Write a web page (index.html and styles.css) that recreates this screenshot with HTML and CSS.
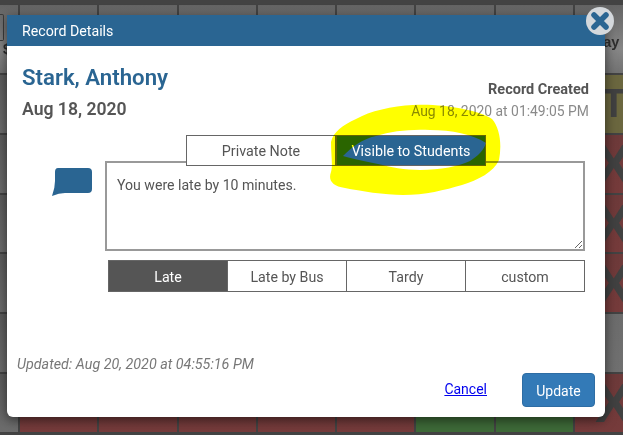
FILE: index.html
```html
<!DOCTYPE html>
<html lang="en">
<head>
<meta charset="utf-8">
<title>Record Details</title>
<link rel="stylesheet" href="styles.css">
</head>
<body>
<div class="sheet">
  <div class="grid">
    <div class="cell head first"><span class="stub"></span><span class="blob">$</span></div>
    <div class="cell head"></div><div class="cell head"></div><div class="cell head"></div><div class="cell head"></div><div class="cell head"></div><div class="cell head"></div><div class="cell head"></div>
    <div class="cell head day"><span>Friday</span></div>

    <div class="cell side"></div>
    <div class="cell olive"></div><div class="cell olive"></div><div class="cell olive"></div><div class="cell olive"></div><div class="cell olive"></div><div class="cell olive"></div><div class="cell olive"></div>
    <div class="cell olive mark-t">T</div>

    <div class="cell side"></div>
    <div class="cell red"></div><div class="cell red"></div><div class="cell red"></div><div class="cell red"></div><div class="cell red"></div><div class="cell red"></div><div class="cell red"></div>
    <div class="cell red mark-x">X</div>

    <div class="cell side"></div>
    <div class="cell red"></div><div class="cell red"></div><div class="cell red"></div><div class="cell red"></div><div class="cell red"></div><div class="cell red"></div><div class="cell red"></div>
    <div class="cell red mark-x">X</div>

    <div class="cell side"></div>
    <div class="cell red"></div><div class="cell red"></div><div class="cell red"></div><div class="cell red"></div><div class="cell red"></div><div class="cell red"></div><div class="cell red"></div>
    <div class="cell red mark-x">X</div>

    <div class="cell side"></div>
    <div class="cell grey"></div><div class="cell grey"></div><div class="cell grey"></div><div class="cell grey"></div><div class="cell grey"></div><div class="cell grey"></div><div class="cell grey"></div>
    <div class="cell grey"></div>

    <div class="cell side"></div>
    <div class="cell red"></div><div class="cell red"></div><div class="cell red"></div><div class="cell red"></div><div class="cell red"></div>
    <div class="cell green"></div><div class="cell green"></div>
    <div class="cell red mark-x">X</div>
  </div>

  <section class="modal">
    <header class="modal-head">Record Details</header>
    <div class="modal-body">
      <div class="summary">
        <div class="who">
          <h1 class="name">Stark, Anthony</h1>
          <p class="date">Aug 18, 2020</p>
        </div>
        <div class="created">
          <p class="created-label">Record Created</p>
          <p class="created-time">Aug 18, 2020 at 01:49:05 PM</p>
        </div>
      </div>

      <div class="note-row">
        <svg class="bubble" viewBox="0 0 40 28" width="40" height="28" aria-hidden="true">
          <path d="M6 0H36Q40 0 40 4V21Q40 25 36 25H13Q7 25 0 28Q3 20 3 13V4Q3 0 6 0Z"/>
        </svg>
        <div class="note-main">
          <div class="tabs">
            <button class="tab">Private Note</button>
            <button class="tab active">Visible to Students</button>
          </div>
          <textarea class="note" spellcheck="false">You were late by 10 minutes.</textarea>
          <div class="choices">
            <button class="choice on">Late</button>
            <button class="choice">Late by Bus</button>
            <button class="choice">Tardy</button>
            <button class="choice">custom</button>
          </div>
        </div>
      </div>

      <p class="updated">Updated: Aug 20, 2020 at 04:55:16 PM</p>

      <div class="actions">
        <a class="cancel" href="#">Cancel</a>
        <button class="update">Update</button>
      </div>
    </div>
  </section>

  <svg class="close" viewBox="0 0 28 28" width="28" height="28" aria-hidden="true">
    <circle cx="14" cy="14" r="14"/>
    <path d="M8 8L20 20M20 8L8 20"/>
  </svg>

  <svg class="scribble" viewBox="0 0 623 435" width="623" height="435" aria-hidden="true">
    <path fill-rule="evenodd" d="M413 105C392 106 370 111 356 119C343 125 333 132 331 142C331 155 333 165 331 172C328 180 332 186 345 188C360 191 385 195 403 195C425 195 445 190 462 185C478 180 494 172 499 160C502 145 500 128 492 119C480 110 440 103 413 105ZM343 156C352 147 362 139 376 136C392 131 410 129 430 130C452 130 472 134 486 143C484 150 478 156 470 161C460 166 440 170 420 170C405 170 390 167 378 164C365 161 352 159 343 156Z"/>
  </svg>
</div>
</body>
</html>
```
FILE: styles.css
```css
* { box-sizing: border-box; }
html, body { margin: 0; padding: 0; }
body { font-family: Roboto, "Liberation Sans", sans-serif; background: #3f3f3f; }

.sheet {
  position: relative;
  width: 623px;
  height: 435px;
  overflow: hidden;
  background: #434343;
}

/* dimmed table behind the dialog */
.grid {
  display: grid;
  grid-template-columns: 18px repeat(8, 77.3px);
  grid-template-rows: 68px repeat(6, 57.8px);
  gap: 2px;
  padding-top: 5px;
  width: 700px;
}
.cell {
  display: flex;
  align-items: center;
  justify-content: center;
  overflow: hidden;
  color: #414141;
  font-family: "Liberation Sans", sans-serif;
}
.head { background: linear-gradient(#646464, #868686 65%, #727272); }
.first { flex-direction: column; align-items: flex-start; justify-content: flex-start; padding-top: 9px; }
.stub { display: block; width: 4px; height: 27px; border: 1px solid #3d3d3d; border-left: 0; border-radius: 0 2px 2px 0; }
.blob { margin-left: 3px; font-size: 14px; font-weight: 700; line-height: 16px; color: #2a2a2a; }
.day { justify-content: flex-end; align-items: flex-start; padding: 29px 33px 0 0; font-size: 14.5px; font-weight: 700; color: #2e2e2e; }
.day span { white-space: nowrap; }
.side { background: linear-gradient(#5c5c5c, #6d6d6d); }
.olive { background: #6b673f; }
.red { background: linear-gradient(#6d3a3a, #763b3b); }
.grey { background: linear-gradient(#6c6c6c, #707070); }
.green { background: #3e6a38; }
.mark-t { font-size: 40px; line-height: 57px; font-weight: 700; }
.mark-x { font-size: 56px; line-height: 57px; font-weight: 700; }

/* dialog */
.modal {
  position: absolute;
  z-index: 0;
  left: 7px;
  top: 15px;
  width: 598px;
  height: 402px;
  display: flex;
  flex-direction: column;
  background: #fff;
  border-radius: 0 0 6px 6px;
  box-shadow: 0 3px 12px rgba(0, 0, 0, 0.55);
}
.modal-head {
  height: 31px;
  flex: none;
  padding: 0 15px;
  background: #2a6592;
  color: #fff;
  font-size: 14.2px;
  line-height: 32px;
}
.modal-body {
  flex: 1;
  display: flex;
  flex-direction: column;
  padding: 0 10px 10px 10px;
}
.summary {
  display: flex;
  justify-content: space-between;
  padding: 0 6px 0 5px;
}
.name {
  margin: 19px 0 0;
  color: #2a6592;
  font-size: 22.2px;
  line-height: 24px;
  font-weight: 600;
}
.date {
  margin: 9px 0 0;
  color: #555;
  font-size: 17.6px;
  line-height: 22px;
  font-weight: 600;
}
.created { text-align: right; padding-top: 36px; }
.created-label {
  margin: 0;
  color: #555;
  font-size: 14.5px;
  line-height: 16px;
  font-weight: 700;
}
.created-time {
  margin: 5px 0 0;
  color: #8a8a8a;
  font-size: 13.9px;
  line-height: 16px;
}

.note-row {
  display: flex;
  margin-top: 15px;
  padding-left: 35px;
}
.bubble { flex: none; margin-top: 33px; fill: #2a6592; }
.note-main {
  width: 480px;
  margin-left: 13px;
  display: flex;
  flex-direction: column;
}
.tabs {
  position: relative;
  z-index: 1;
  display: flex;
  height: 31px;
  margin: 0 0 -5px 81px;
}
.tab {
  width: 150px;
  height: 31px;
  margin: 0;
  padding: 1px 0 0;
  border: 1px solid #666;
  background: #fff;
  color: #555;
  font: inherit;
  font-size: 14.3px;
}
.tab.active { background: #2a6592; color: #fff; }
.note {
  display: block;
  width: 480px;
  height: 90px;
  padding: 13px 10px;
  border: 2px solid #999;
  border-radius: 0;
  outline: 0;
  color: #555;
  font: inherit;
  font-size: 14.1px;
  line-height: 18px;
  resize: both;
}
.choices {
  display: flex;
  margin: 9px 0 0 3px;
  height: 32px;
}
.choice {
  flex: 1;
  margin: 0 0 0 -1px;
  padding: 1px 0 0;
  border: 1px solid #666;
  background: #fff;
  color: #555;
  font: inherit;
  font-size: 14.2px;
}
.choice:first-child { margin-left: 0; }
.choice.on { background: #555; color: #fff; border-color: #666; }

.updated {
  margin: 63px 0 0;
  color: #777;
  font-size: 14.3px;
  line-height: 18px;
  font-style: italic;
}
.actions {
  display: flex;
  justify-content: flex-end;
  align-items: center;
  margin-top: 0;
}
.cancel {
  margin: 0 35px 2px 0;
  color: #00e;
  font-size: 14px;
  line-height: 18px;
}
.update {
  width: 73px;
  height: 34px;
  padding: 1px 0 0;
  border: 1px solid #2e6da4;
  border-radius: 4px;
  background: #337ab7;
  color: #fff;
  font: inherit;
  font-size: 14px;
}

/* close control sits over the dialog corner */
.close {
  position: absolute;
  left: 586px;
  top: 7px;
}
.close circle { fill: #d4d8dc; }
.close path { fill: none; stroke: #2a6592; stroke-width: 5.5; stroke-linecap: round; }

/* highlighter annotation laid over the dialog */
.scribble {
  position: absolute;
  left: 0;
  top: 0;
  pointer-events: none;
  mix-blend-mode: multiply;
}
.scribble path { fill: #ff0; }
```
